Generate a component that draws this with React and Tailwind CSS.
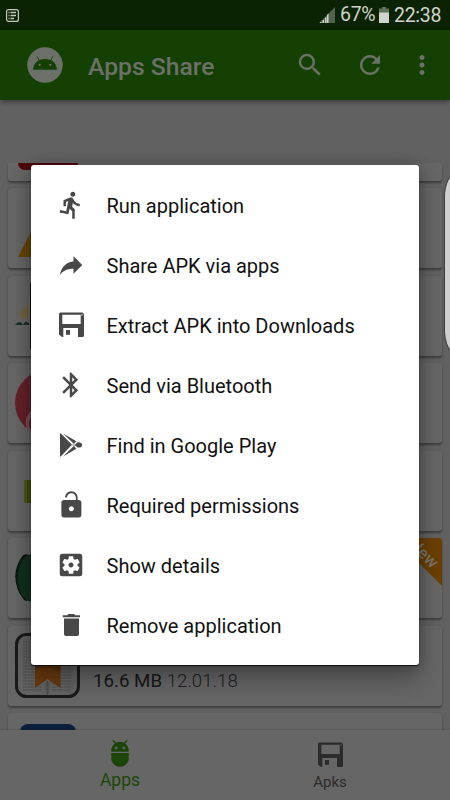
import React from "react";
import {
  MdAdb,
  MdBluetooth,
  MdDirectionsRun,
  MdMoreVert,
  MdRefresh,
  MdReply,
  MdSearch,
  MdSettingsApplications,
} from "react-icons/md";

function FloppyIcon({ className }) {
  return (
    <svg viewBox="0 0 30 30" className={className} fill="currentColor">
      <path
        fillRule="evenodd"
        d="M4.5 2.5H26.5L28 4V25.5Q28 27 26.5 27H22V18H7.3V27H6L3 24.5V4Q3 2.5 4.5 2.5ZM6.3 4.8V14H24.7V4.8ZM25.4 4.2V5.4H26.6V4.2Z"
      />
      <rect x="10" y="20" width="4" height="4.800" />
    </svg>
  );
}

function PlayStoreIcon({ className }) {
  return (
    <svg viewBox="0 0 30 30" className={className} fill="currentColor">
      <path d="M4 3.2L5.4 4L16 14.800L5.200 26.100L4 26.800Z" />
      <path d="M7 3.400L20.400 11.200L17.800 13.700Z" />
      <path d="M7 26.600L20.400 18.800L17.800 16.100Z" />
      <path d="M21.400 12.300Q25.800 12 26.200 15Q25.800 18 21.400 17.500L18.800 15Z" />
      <path d="M15.500 14.900L18 12.800L20.400 14.900L18 17Z" opacity=".35" />
    </svg>
  );
}

function LockOpenIcon({ className }) {
  return (
    <svg viewBox="0 0 24 24" className={className} fill="currentColor">
      <path
        fillRule="evenodd"
        transform="translate(.3 0)"
        d="M12 17c1.1 0 2-.9 2-2s-.9-2-2-2-2 .9-2 2 .9 2 2 2zm6-9h-1V6c0-2.76-2.24-5-5-5S7 3.24 7 6h1.400c0-2 1.600-3.500 3.600-3.500 2 0 3.600 1.500 3.600 3.500v2H6c-1.100 0-2 .9-2 2v10c0 1.100.9 2 2 2h12c1.100 0 2-.9 2-2V10c0-1.100-.9-2-2-2z"
      />
    </svg>
  );
}

function TrashIcon({ className }) {
  return (
    <svg viewBox="0 0 30 30" className={className} fill="currentColor">
      <path d="M6.800 5.200H11.200L12.500 4H18L19.300 5.200H24V7.300H6.800Z" />
      <path d="M8 8.500H23V24Q23 26 21 26H10Q8 26 8 24Z" />
    </svg>
  );
}

const MENU = [
  { label: "Run application", Icon: MdDirectionsRun },
  { label: "Share APK via apps", Icon: MdReply, flip: true },
  { label: "Extract APK into Downloads", Icon: FloppyIcon },
  { label: "Send via Bluetooth", Icon: MdBluetooth },
  { label: "Find in Google Play", Icon: PlayStoreIcon },
  { label: "Required permissions", Icon: LockOpenIcon },
  { label: "Show details", Icon: MdSettingsApplications },
  { label: "Remove application", Icon: TrashIcon },
];

function StatusBar() {
  return (
    <div className="flex h-[30px] items-center justify-between bg-[#0b2303] pl-[6px] pr-2 text-[#d0d4cf]">
      <svg viewBox="0 0 13 13" className="h-[13px] w-[13px]" fill="none" stroke="#c3c9c1">
        <rect x=".6" y=".6" width="11.8" height="11.8" rx="2" strokeWidth="1.2" />
        <path d="M2.5 3.5h1M4.5 3.5h5.5M2.5 6.5h1M4.5 6.5h5.5M2.5 9.5h1M4.5 9.5h3.5" strokeWidth="1.5" />
      </svg>
      <div className="flex items-center">
        <svg viewBox="0 0 16 16" className="mr-[5px] h-4 w-4">
          <path d="M0 16L16 0V16Z" fill="#51634b" />
          <path d="M1 16v-1h1.500v1zM3.500 16v-3H5v3zM6 16v-5.500h1.500V16zM8 16V8L9.500 6.500V16z" fill="#d0d4cf" />
        </svg>
        <span className="w-[36px] whitespace-nowrap text-[19.5px] leading-[30px] tracking-[-0.3px]">67%</span>
        <svg viewBox="0 0 10 16" className="ml-[3px] mr-[5px] h-4 w-[10px]">
          <path d="M3 0h4v1.500h3V6H0V1.500h3z" fill="#5f7159" />
          <path d="M0 5.500h10V16H0z" fill="#d0d4cf" />
        </svg>
        <span className="w-[48px] whitespace-nowrap pt-px text-[19.5px] leading-[29px] tracking-[-0.3px]">22:38</span>
      </div>
    </div>
  );
}

function Toolbar() {
  return (
    <header className="relative flex h-[70px] items-center bg-[#154004] pl-[27px] text-[#6b7069] shadow-[0_2px_5px_rgba(0,0,0,0.4)]">
      <svg viewBox="0 0 36 36" className="h-9 w-9">
        <circle cx="18" cy="18" r="17.800" fill="#6b7069" />
        <path d="M6 22.800C6.500 16 11 12 18 12s11.500 4 12 10.800z" fill="#154004" />
        <path d="M12 13.200L10.200 9.400M24 13.200L25.800 9.400" stroke="#154004" strokeWidth=".9" />
        <circle cx="12.700" cy="17.800" r="1.100" fill="#6b7069" />
        <circle cx="23.300" cy="17.800" r="1.100" fill="#6b7069" />
      </svg>
      <h1 className="ml-[25px] w-[207px] whitespace-nowrap pt-[3px] text-[24.7px] font-medium">Apps Share</h1>
      <MdSearch className="h-[30px] w-[30px]" />
      <MdRefresh className="ml-[30px] h-[30px] w-[30px]" />
      <MdMoreVert className="ml-[22px] h-[30px] w-[30px]" />
    </header>
  );
}

function Card({ children }) {
  return (
    <div className="relative mb-[7.5px] flex h-20 shrink-0 items-center rounded-[3px] bg-[#666666] shadow-[0_1.5px_2px_rgba(0,0,0,0.35)]">
      {children}
    </div>
  );
}

function TriangleArt() {
  return (
    <svg viewBox="0 0 66 66" className="ml-[7px] h-[66px] w-[66px]">
      <path d="M3 62L33 3L63 62Z" fill="#664507" />
    </svg>
  );
}

function BookArt() {
  return (
    <svg viewBox="0 0 66 66" className="ml-[7px] h-[66px] w-[66px]">
      <path d="M7 35Q2 30 10 24Q5 31 9 36ZM9 36Q6 29 11 25V20Q15 29 10 36Z" fill="#776333" />
      <path d="M0 42Q5 36 8 42H0ZM8 42Q11 35 15 42Z" fill="#18302a" />
      <path d="M15 0H62V66H15Z" fill="#10140f" />
    </svg>
  );
}

function FlameArt() {
  return (
    <svg viewBox="0 0 66 66" className="ml-[7px] h-[66px] w-[66px]">
      <circle cx="33" cy="33" r="33" fill="#652029" />
      <path d="M14 62C6 48 15 43 24 30V66Z" fill="#7a5157" />
      <path d="M16 60C10 51 17 45 24 39V64Z" fill="#652029" />
    </svg>
  );
}

function RobotArmArt() {
  return (
    <svg viewBox="0 0 66 66" className="ml-[7px] h-[66px] w-[66px]">
      <rect x="9" y="22" width="10" height="23" rx="2.500" fill="#3f4d12" />
      <rect x="9" y="22" width="3" height="23" rx="1.500" fill="#4b5d17" />
    </svg>
  );
}

function GreenDiscArt() {
  return (
    <svg viewBox="0 0 66 66" className="ml-[7px] h-[66px] w-[66px]">
      <path d="M8 10L12 9L20 16V50L12 56L9 55Q-8 32 8 10Z" fill="#0c1510" />
      <ellipse cx="18" cy="33" rx="16" ry="24" fill="#11301e" />
      <path d="M6 16Q-2 33 6 50" fill="none" stroke="#0d1c12" strokeWidth="1.500" />
    </svg>
  );
}

const PAGE_LINES = [9, 12, 15, 18, 21, 24, 27, 30, 33, 36, 39, 42, 45, 48, 51, 54, 57];

function BibleArt() {
  return (
    <svg viewBox="0 0 66 66" className="ml-[7px] h-[66px] w-[66px] shrink-0">
      <rect x="1.500" y="1.500" width="62" height="62" rx="10" fill="#636363" stroke="#191a1a" strokeWidth="3" />
      {PAGE_LINES.map((y) => (
        <path key={y} d={`M8 ${y}H26M37 ${y}H57`} stroke="#484848" strokeWidth=".7" strokeDasharray="4 .8 2 .6" />
      ))}
      <path d="M20 2H45.500V55L32.500 46L20 55Z" fill="#693a0e" />
      <path d="M20 2H45.500V38Q32 32 20 36Z" fill="#56300d" />
      <path d="M32.500 48Q29 54 32.500 62Q36 54 32.500 48V62" fill="none" stroke="#474747" strokeWidth=".7" />
    </svg>
  );
}

function AppList() {
  return (
    <main className="mt-[63px] flex h-[567px] flex-col overflow-hidden px-2">
      <div className="mb-[7px] flex h-[18px] shrink-0 rounded-b-[3px] bg-[#666666] pl-[10px] shadow-[0_1.5px_2px_rgba(0,0,0,0.35)]">
        <div className="h-[7px] w-[60px] rounded-b-[10px] bg-[#4d080d]" />
      </div>
      <Card><TriangleArt /></Card>
      <Card><BookArt /></Card>
      <Card><FlameArt /></Card>
      <Card><RobotArmArt /></Card>
      <Card>
        <GreenDiscArt />
        <svg viewBox="0 0 48 48" className="absolute right-0 top-0 h-12 w-12">
          <path d="M0 0H45Q48 0 48 3V48Z" fill="#6b3f00" />
        </svg>
        <span className="absolute right-[1px] top-[5px] rotate-45 text-[17px] font-medium leading-5 text-[#777570]">New</span>
      </Card>
      <Card>
        <BibleArt />
        <p className="ml-3 mt-8 whitespace-nowrap text-[18.700px] text-[#171717]">
          16.6 MB <span className="font-light text-[#202020]">12.01.18</span>
        </p>
      </Card>
      <Card>
        <div className="ml-3 mt-[22px] h-20 w-[56px] rounded-[8px] bg-[#0b1f3e]" />
      </Card>
    </main>
  );
}

function BottomNav() {
  return (
    <nav className="relative flex h-[70px] bg-[#666666] shadow-[0_-1px_2px_rgba(0,0,0,0.12)]">
      <div className="flex w-[240px] flex-col items-center pt-[8px] text-[#1d4507]">
        <MdAdb className="h-[30px] w-[30px]" />
        <span className="text-[17.500px] leading-6">Apps</span>
      </div>
      <div className="flex w-[180px] flex-col items-center pt-[10px] text-[#2b2b2b]">
        <FloppyIcon className="h-[30px] w-[30px]" />
        <span className="text-[15px] leading-6">Apks</span>
      </div>
    </nav>
  );
}

function ActionDialog() {
  return (
    <div
      role="dialog"
      className="absolute left-[31px] top-[165px] h-[500px] w-[388px] rounded-[3px] bg-white py-[11px] shadow-[0_1px_1px_#111,0_14px_24px_rgba(0,0,0,0.3),0_0_14px_rgba(0,0,0,0.22)]"
    >
      <ul>
        {MENU.map(({ label, Icon, flip }) => (
          <li key={label} className="flex h-[60px] items-center pl-[25px]">
            <Icon className={flip ? "mb-[2px] h-[30px] w-[30px] -scale-x-100 text-[#484848]" : "mb-[2px] h-[30px] w-[30px] text-[#484848]"} />
            <span className="ml-[20.5px] whitespace-nowrap text-[20px] text-[#111111]">{label}</span>
          </li>
        ))}
      </ul>
    </div>
  );
}

export default function App() {
  return (
    <div className="relative h-[800px] w-[450px] overflow-hidden bg-[#616161] font-[Roboto,sans-serif]">
      <StatusBar />
      <Toolbar />
      <AppList />
      <BottomNav />
      <div className="absolute -right-[12px] top-[173px] h-[181px] w-[18px] rounded-l-[12px_24px] border border-[#3c3c3c] bg-[#cecece]" />
      <ActionDialog />
    </div>
  );
}
